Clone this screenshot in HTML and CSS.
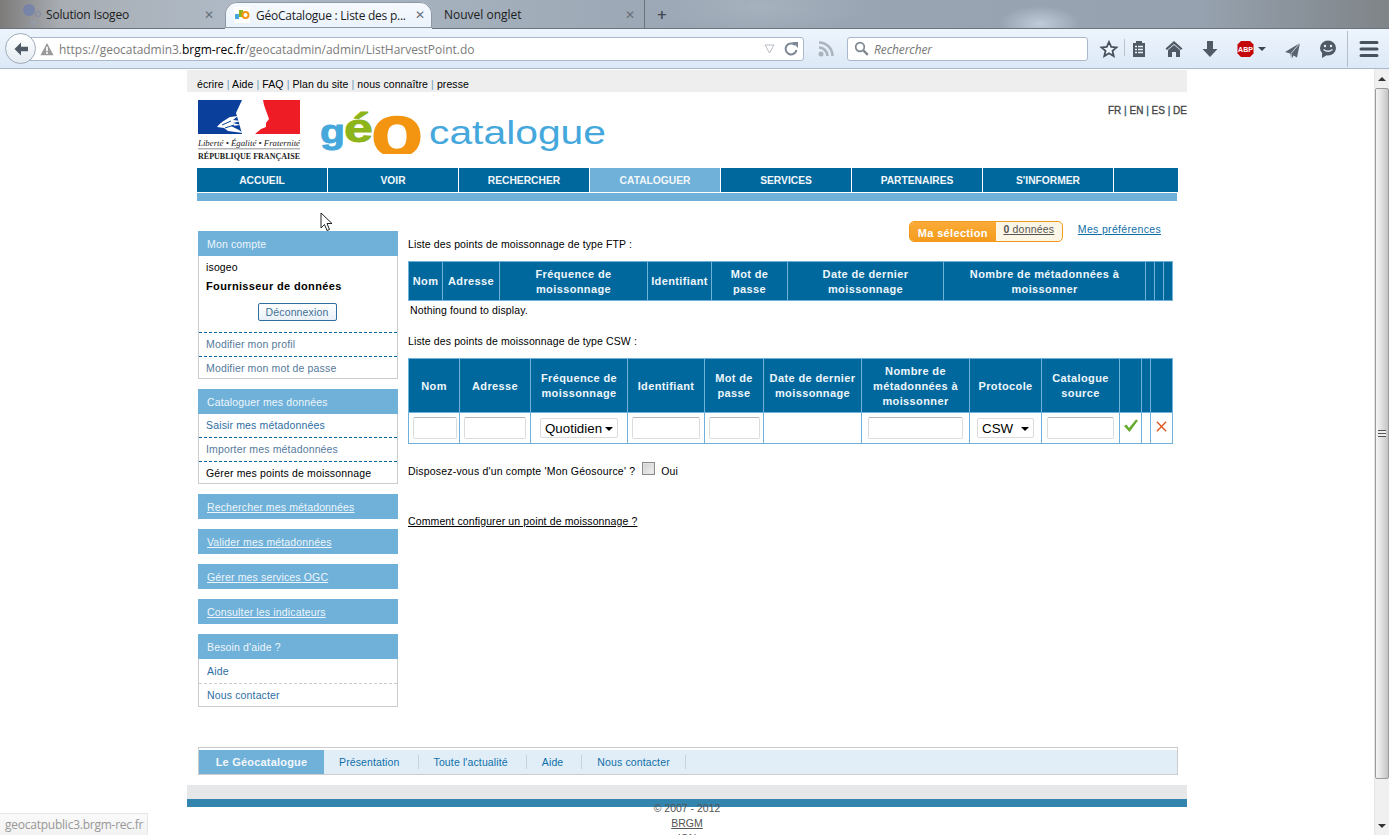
FILE: index.html
```html
<!DOCTYPE html>
<html lang="fr">
<head>
<meta charset="utf-8">
<title>GéoCatalogue : Liste des points de moissonnage</title>
<link rel="stylesheet" href="styles.css">
</head>
<body>
<header class="chrome">
  <div class="tabbar">
    <div class="tab tab-first">
      <svg class="fav-ghost" width="24" height="24" viewBox="0 0 24 24"><circle cx="7" cy="7" r="6" fill="#6f7fb0" opacity=".75"/><circle cx="16" cy="11" r="2.5" fill="none" stroke="#6f7fb0" opacity=".6"/><circle cx="11" cy="20" r="3" fill="#8fa0b8" opacity=".4"/></svg>
      <span class="tab-title">Solution Isogeo</span>
      <span class="tab-x">✕</span>
    </div>
    <div class="tab tab-active">
      <svg class="fav" width="16" height="16" viewBox="0 0 16 16"><rect width="16" height="16" fill="#fff"/><rect x="1" y="7" width="4" height="5" fill="#45a8dc"/><rect x="5" y="3" width="4" height="7" fill="#8db51b"/><circle cx="11.5" cy="8" r="3" fill="none" stroke="#f39510" stroke-width="2"/></svg>
      <span class="tab-title">GéoCatalogue : Liste des p...</span>
      <span class="tab-x">✕</span>
    </div>
    <div class="tab tab-third">
      <span class="tab-title">Nouvel onglet</span>
      <span class="tab-x">✕</span>
    </div>
    <span class="tab-plus">+</span>
  </div>
  <div class="toolbar">
    <div class="back"><svg width="18" height="18" viewBox="0 0 18 18"><path d="M9 2.5 2.5 9 9 15.500v-4.300h7V6.800H9z" fill="#4f5a66"/></svg></div>
    <div class="urlbar">
      <svg class="warn" width="14" height="14" viewBox="0 0 16 15"><path d="M8 .5 15.500 14.500H.5z" fill="#9a9a9a"/><rect x="7" y="5" width="2" height="5" fill="#fff"/><rect x="7" y="11" width="2" height="2" fill="#fff"/></svg>
      <span class="url"><span class="url-dim">https://geocatadmin3.</span>brgm-rec.fr<span class="url-dim">/geocatadmin/admin/ListHarvestPoint.do</span></span>
      <svg class="url-end" width="36" height="16" viewBox="0 0 36 16"><path d="M1 4h9L5.500 12z" fill="#fff" stroke="#b5bcc4"/><path d="M31 4a5.500 5.500 0 1 0 1.500 5" fill="none" stroke="#7d8894" stroke-width="2"/><path d="M28 1h6v6z" fill="#7d8894"/></svg>
    </div>
    <svg class="feed" width="16" height="16" viewBox="0 0 16 16"><circle cx="3" cy="13" r="2.500" fill="#aab4bf"/><path d="M1 6.500A8.500 8.500 0 0 1 9.500 15M1 1.500A13.500 13.500 0 0 1 14.500 15" fill="none" stroke="#aab4bf" stroke-width="2.600"/></svg>
    <div class="searchbar">
      <svg width="15" height="15" viewBox="0 0 15 15"><circle cx="6" cy="6" r="4.300" fill="none" stroke="#7d8690" stroke-width="1.700"/><path d="m9.500 9.500 4.300 4.300" stroke="#7d8690" stroke-width="2.400"/></svg>
      <span class="search-text">Rechercher</span>
    </div>
    <svg class="toolicons" width="294" height="40" viewBox="1095 29 294 40">
      <path d="M1109 42l2.200 4.900 5.300.500-4 3.500 1.200 5.200-4.700-2.800-4.700 2.800 1.200-5.200-4-3.500 5.300-.500z" fill="#fff" fill-opacity=".4" stroke="#47525e" stroke-width="1.800"/>
      <path d="M1124.500 39v17" stroke="#b9c4cf"/>
      <path d="M1133 43h3v-2h6v2h3v14h-12z" fill="#4f5a66"/><path d="M1135 46.500h2m1 0h5m-8 3h2m1 0h5m-8 3h2m1 0h5" stroke="#e6eff8" stroke-width="1.300"/>
      <path d="M1174 41l-8.500 7.500 1.500 1.500 7-6 7 6 1.500-1.500z" fill="#4f5a66"/><path d="M1168 50l6-5 6 5v7h-4v-5h-4v5h-4z" fill="#4f5a66"/>
      <path d="M1207 41h6v8h4.500l-7.500 8-7.500-8h4.500z" fill="#4f5a66"/>
      <path d="M1241 41h9l3.500 3.500v9l-3.500 3.500h-9l-3.500-3.500v-9z" fill="#c40808"/>
      <text x="1245.500" y="52" class="abp">ABP</text>
      <path d="M1258 47h8l-4 4z" fill="#3a4652"/>
      <path d="M1300 43l-15 9 5 1.500 1.500 5.500 2-3.500 3.500 2z" fill="#596470"/><path d="M1300 43l-9 10.500.5 5.500" fill="none" stroke="#e6eff8" stroke-width=".8"/>
      <ellipse cx="1328" cy="48" rx="8" ry="7.500" fill="#4f5a66"/><path d="M1322 53v5l5-3z" fill="#4f5a66"/><circle cx="1325" cy="46" r="1.200" fill="#e6eff8"/><circle cx="1331" cy="46" r="1.200" fill="#e6eff8"/><path d="M1323.500 49.500q4.500 3.500 9 0" fill="none" stroke="#e6eff8" stroke-width="1.300"/>
      <path d="M1347.500 31v36" stroke="#b3bfcb"/>
      <path d="M1361 42.500h16M1361 49h16M1361 55.500h16" stroke="#47525e" stroke-width="3" stroke-linecap="round"/>
    </svg>
  </div>
</header>

<div class="viewport">
  <div class="page">
    <div class="wrap">
      <div class="topstrip"><a>écrire</a> <i>|</i> <a>Aide</a> <i>|</i> <a>FAQ</a> <i>|</i> <a>Plan du site</a> <i>|</i> <a>nous connaître</a> <i>|</i> <a>presse</a></div>
      <div class="masthead">
        <svg class="rf" width="104" height="64" viewBox="0 0 104 64">
          <rect x="1" width="52" height="34" fill="#0a3f9b"/>
          <rect x="53" width="50" height="34" fill="#ee1c25"/>
          <path d="M45 0H66L67 5 72 19 69 23V27L64 29 58 34H45L42 23 39 13z" fill="#fff"/>
          <path d="M20 27C24 22 28 20 33 17L41 16 36 20 44 21 36 23 44 25 34 26 42 30 46 33 31 31 27 28z" fill="#fff"/>
          <path d="M25 25l9-4m-6 7l9-3" stroke="#0a3f9b"/>
          <text x="52" y="46" class="rf-motto" textLength="102" lengthAdjust="spacingAndGlyphs">Liberté • Égalité • Fraternité</text>
          <rect x="1" y="48" width="102" height="1.500" fill="#b5b5b5"/>
          <text x="52" y="59" class="rf-name" textLength="102" lengthAdjust="spacingAndGlyphs">RÉPUBLIQUE FRANÇAISE</text>
        </svg>
        <svg class="geo" width="290" height="44" viewBox="0 0 290 44">
          <text x="0" y="33" class="geo-g" transform="scale(1.200 1)">g</text>
          <text x="0" y="32" class="geo-e" transform="translate(24 0) scale(1.300 1)">é</text>
          <text x="0" y="46" class="geo-o" transform="translate(51 0) scale(1.150 1)">o</text>
          <text x="109" y="34" class="geo-cat" textLength="177" lengthAdjust="spacingAndGlyphs">catalogue</text>
        </svg>
        <div class="langs"><a>FR</a> <i>|</i> <a>EN</a> <i>|</i> <a>ES</a> <i>|</i> <a>DE</a></div>
      </div>
      <nav class="mainnav">
        <a>ACCUEIL</a><a>VOIR</a><a>RECHERCHER</a><a class="on">CATALOGUER</a><a>SERVICES</a><a>PARTENAIRES</a><a>S'INFORMER</a><a class="last"></a>
      </nav>
      <div class="subbar"></div>

      <div class="columns">
        <aside class="sidebar">
          <section class="box">
            <h3 class="box-head">Mon compte</h3>
            <div class="box-body">
              <div class="user">isogeo</div>
              <div class="role">Fournisseur de données</div>
              <div class="logout"><span class="btn">Déconnexion</span></div>
              <a class="row">Modifier mon profil</a>
              <a class="row">Modifier mon mot de passe</a>
            </div>
          </section>
          <section class="box">
            <h3 class="box-head">Cataloguer mes données</h3>
            <div class="box-body">
              <a class="row first">Saisir mes métadonnées</a>
              <a class="row">Importer mes métadonnées</a>
              <a class="row current">Gérer mes points de moissonnage</a>
            </div>
          </section>
          <h3 class="box-head solo"><u>Rechercher mes métadonnées</u></h3>
          <h3 class="box-head solo"><u>Valider mes métadonnées</u></h3>
          <h3 class="box-head solo"><u>Gérer mes services OGC</u></h3>
          <h3 class="box-head solo"><u>Consulter les indicateurs</u></h3>
          <section class="box">
            <h3 class="box-head">Besoin d'aide ?</h3>
            <div class="box-body">
              <a class="row first help">Aide</a>
              <a class="row help light">Nous contacter</a>
            </div>
          </section>
        </aside>

        <main class="main">
          <div class="selrow">
            <div class="badge"><span class="badge-l">Ma sélection</span><span class="badge-r"><b>0</b> données</span></div>
            <a class="prefs">Mes préférences</a>
          </div>
          <p class="title t1">Liste des points de moissonnage de type FTP :</p>
          <table class="grid ftp">
            <colgroup><col class="f1"><col class="f2"><col class="f3"><col class="f4"><col class="f5"><col class="f6"><col class="f7"><col class="f8"><col class="f8"><col class="f9"></colgroup>
            <thead><tr>
              <th>Nom</th><th>Adresse</th><th>Fréquence de<br>moissonnage</th><th>Identifiant</th><th>Mot de<br>passe</th><th>Date de dernier<br>moissonnage</th><th>Nombre de métadonnées à<br>moissonner</th><th></th><th></th><th></th>
            </tr></thead>
          </table>
          <p class="empty">Nothing found to display.</p>
          <p class="title t2">Liste des points de moissonnage de type CSW :</p>
          <table class="grid csw">
            <colgroup><col class="c1"><col class="c2"><col class="c3"><col class="c4"><col class="c5"><col class="c6"><col class="c7"><col class="c8"><col class="c9"><col class="c10"><col class="c11"><col class="c12"></colgroup>
            <thead><tr>
              <th>Nom</th><th>Adresse</th><th>Fréquence de<br>moissonnage</th><th>Identifiant</th><th>Mot de<br>passe</th><th>Date de dernier<br>moissonnage</th><th>Nombre de<br>métadonnées à<br>moissonner</th><th>Protocole</th><th>Catalogue<br>source</th><th></th><th></th><th></th>
            </tr></thead>
            <tbody><tr>
              <td><input class="in w44" type="text"></td>
              <td><input class="in w62" type="text"></td>
              <td><span class="sel s78"><select><option>Quotidien</option></select></span></td>
              <td><input class="in w68" type="text"></td>
              <td><input class="in w51" type="text"></td>
              <td></td>
              <td><input class="in w95" type="text"></td>
              <td><span class="sel s57"><select><option>CSW</option></select></span></td>
              <td><input class="in w67" type="text"></td>
              <td><svg class="act" width="16" height="14" viewBox="0 0 16 14"><path d="M1 7l2.500-1.500L6 9l7-8.500 2 1L6.500 13z" fill="#66ab2a"/></svg></td>
              <td></td>
              <td><svg class="act" width="13" height="13" viewBox="0 0 14 14"><path d="M2 2l10 10M12 2 2 12" stroke="#e2571e" stroke-width="1.500"/></svg></td>
            </tr></tbody>
          </table>
          <p class="geosource">Disposez-vous d'un compte 'Mon Géosource' ? <input class="check" type="checkbox"> <span class="oui">Oui</span></p>
          <p class="howto"><a>Comment configurer un point de moissonnage ?</a></p>
        </main>
      </div>

      <div class="footnav">
        <strong>Le Géocatalogue</strong><a>Présentation</a><a>Toute l'actualité</a><a>Aide</a><a>Nous contacter</a>
      </div>
      <div class="band-grey"></div>
      <div class="band-teal"></div>
      <div class="legal">© 2007 - 2012<br><a>BRGM</a><br><a>IGN</a></div>
    </div>
  </div>
  <div class="scrollbar">
    <div class="sb-btn"><span class="arrow-up"></span></div>
    <div class="sb-thumb"><span class="grip"></span></div>
    <div class="sb-track"></div>
    <div class="sb-btn down"><span class="arrow-down"></span></div>
  </div>
</div>

<div class="status">geocatpublic3.brgm-rec.fr</div>
<svg class="cursor" width="14" height="21" viewBox="0 0 14 21"><path d="M1 1v15l3.500-3.500 2.500 6 2.500-1-2.500-6H12z" fill="#fff" stroke="#222"/></svg>
</body>
</html>
```
FILE: styles.css
```css
* { box-sizing: border-box; }
html, body { margin: 0; height: 835px; overflow: hidden; background: #fff; }
body { font-family: "Liberation Sans", Arial, sans-serif; font-size: 11px; color: #000; position: relative; }
a { color: inherit; }
p, h3 { margin: 0; font-weight: normal; }
i { font-style: normal; }

/* browser chrome */
.chrome { height: 69px; font-family: "Open Sans", sans-serif; }
.tabbar {
  height: 29px; display: flex; align-items: stretch; position: relative;
  box-shadow: inset 0 -1px #69747f;
  background:
    radial-gradient(ellipse 40px 18px at 1040px 24px, rgba(205,217,230,.75), transparent),
    radial-gradient(ellipse 110px 30px at 760px 6px, rgba(190,200,212,.35), transparent),
    linear-gradient(90deg, #7d7b7a 0, #a8adb3 60px, #aeb9c5 220px, #9aa6b3 700px, #96a2af 1200px, #7f8488 1389px);
}
.tab { display: flex; align-items: center; font-size: 12px; color: #1c1c1c; flex: none; }
.tab-title { white-space: nowrap; }
.tab-x { position: absolute; font-size: 12px; font-weight: 700; color: #66707a; font-family: "DejaVu Sans", sans-serif; }
.tab-first { width: 225px; padding-left: 22px; }
.tab-first .tab-title { letter-spacing: -.2px; }
.tab-first .tab-x { left: 204px; }
.tab-active {
  width: 207px; margin-top: 2px; padding-left: 9px; border-radius: 12px 12px 0 0;
  background: linear-gradient(#f6fafe, #eaf2fb); box-shadow: 0 0 0 1px #8d98a4 inset;
  border-bottom: 1px solid #eaf2fb;
}
.tab-active .fav { margin-right: 6px; }
.tab-active .tab-title { letter-spacing: -.25px; }
.tab-active .tab-x { left: 415px; }
.tab-third { width: 213px; padding-left: 12px; border-right: 1px solid #68737e; }
.tab-third .tab-x { left: 625px; }
.tab-plus { margin-left: 12px; align-self: center; font-size: 17px; font-weight: 600; color: #3f4852; }

.toolbar {
  height: 40px; display: flex; align-items: center; padding-left: 5px;
  background: linear-gradient(#edf4fc, #dde9f7); border-bottom: 1px solid #a9b9cb; position: relative;
}
.back {
  width: 31px; height: 31px; border-radius: 50%; background: linear-gradient(#fff, #e4ebf3); border: 1px solid #9eacbb;
  display: flex; align-items: center; justify-content: center; flex: none; position: relative; z-index: 1;
}
.urlbar {
  width: 777px; height: 24px; margin-left: -8px; padding-left: 11px; display: flex; align-items: center;
  background: #fff; border: 1px solid #a9b9cb; border-radius: 0 3px 3px 0; font-size: 12px;
}
.warn { flex: none; }
.url { margin-left: 5px; padding-top: 1px; color: #000; white-space: nowrap; letter-spacing: -.03px; }
.url-dim { color: #7b7b7b; }
.url-end { margin-left: auto; margin-right: 3px; }
.feed { margin: 0 13px 0 14px; flex: none; }
.searchbar {
  width: 241px; height: 24px; padding-left: 6px; display: flex; align-items: center; gap: 5px;
  background: #fff; border: 1px solid #a9b9cb; border-radius: 3px; flex: none;
}
.search-text { padding-top: 1px; font-style: italic; font-size: 12px; color: #777; letter-spacing: -.1px; }
.toolicons { flex: none; margin-left: 7px; }
.abp { font: bold 7px "Liberation Sans", sans-serif; fill: #fff; text-anchor: middle; }

/* viewport */
.viewport { display: flex; height: 766px; }
.page { flex: 1; overflow: hidden; min-width: 0; }
.wrap { width: 1000px; margin: 0 auto; }

.topstrip { height: 22px; margin-top: 1px; background: #eee; padding: 8px 0 0 10px; line-height: 13px; font-size: 10.500px; letter-spacing: .09px; white-space: nowrap; }
.topstrip i { color: #6b9ab8; }

.masthead { height: 76px; padding: 8px 0 0 10px; display: flex; align-items: flex-start; }
.rf { flex: none; }
.rf-motto { font: italic 8px "Liberation Serif", serif; text-anchor: middle; fill: #222; }
.rf-name { font: bold 8.500px "Liberation Serif", serif; text-anchor: middle; fill: #222; }
.geo { flex: none; margin: 10px 0 0 19px; }
.geo-g { font: bold 34px "Liberation Sans", sans-serif; fill: #45a8dc; stroke: #45a8dc; stroke-width: .9px; }
.geo-e { font: bold 40px "Liberation Sans", sans-serif; fill: #8db51b; stroke: #8db51b; stroke-width: .9px; }
.geo-o { font: bold 74px "Liberation Sans", sans-serif; fill: #f39510; stroke: #f39510; stroke-width: 1.500px; }
.geo-cat { font: 34px "Liberation Sans", sans-serif; fill: #45a8dc; }
.langs { margin: 4px 0 0 auto; font-size: 10px; color: #444; line-height: 13px; -webkit-text-stroke: .3px #444; white-space: nowrap; }
.langs i { color: #00689d; }

.mainnav { height: 24px; margin-left: 10px; width: 981px; display: flex; background: #00689d; }
.mainnav a {
  width: 131px; flex: none; border-right: 1px solid #fff; text-align: center; line-height: 25px;
  color: #f2f7fb; font-size: 10.250px; font-weight: 700;
}
.mainnav a.on { background: #6fb1d9; }
.mainnav a.last { width: 64px; border: 0; }
.subbar { width: 980px; height: 8px; margin: 1px 0 0 10px; background: #6fb1d9; }

.columns { display: flex; padding-left: 11px; margin-top: 20px; }
.sidebar { width: 200px; flex: none; padding-top: 10px; display: flex; flex-direction: column; gap: 10px; letter-spacing: .15px; }
.box-head { height: 25px; line-height: 26px; padding-left: 9px; background: #6fb1d9; color: #eef6fb; font-size: 10.500px; }
.box-head u { text-decoration-thickness: 1px; }
.box-body { border: 1px solid #ccc; border-top: 0; }
.user { height: 24px; line-height: 23px; padding-left: 7px; font-size: 10.500px; }
.role { height: 14px; line-height: 12px; padding-left: 7px; font-size: 11px; font-weight: 700; letter-spacing: .36px; }
.logout { height: 38px; padding: 9px 2px 0 0; text-align: center; }
.btn {
  display: inline-block; width: 79px; height: 18px; line-height: 16px; border: 1px solid #2f6f9f; border-radius: 2px;
  color: #3f6f97; font-size: 10.500px; background: linear-gradient(#fff, #e9f1f7);
}
.row { display: block; height: 24px; line-height: 23px; padding-left: 7px; border-top: 1px dashed #00689d; color: #557a9c; font-size: 10.500px; }
.row:last-child { height: 22px; }
.row.first { border-top: 0; height: 23px; color: #2d6ea3; }
.row.current { color: #000; }
.row.help { padding-left: 8px; color: #2d6ea3; }
.row.help.first { height: 24px; line-height: 25px; }
.row.light { border-top-color: #ccc; height: 23px; }

.main { margin-left: 10px; width: 779px; flex: none; }
.selrow { height: 17px; display: flex; justify-content: flex-end; align-items: flex-start; padding-right: 26px; }
.badge { display: flex; height: 21px; width: 154px; border: 1px solid #f39a1e; border-radius: 5px; overflow: hidden; background: #fbf6e6; flex: none; }
.badge-l { width: 86px; background: linear-gradient(#fbab38, #f49b1d); color: #fff; font-weight: 700; font-size: 11px; letter-spacing: .33px; line-height: 23px; text-align: center; }
.badge-r { flex: 1; text-align: center; font-size: 10.500px; letter-spacing: .2px; line-height: 14px; color: #555; text-decoration: underline; }
.prefs { margin-left: 15px; margin-top: 2px; color: #0f6ea8; font-size: 10.500px; letter-spacing: .33px; text-decoration: underline; line-height: 13px; white-space: nowrap; }
.title { line-height: 12px; font-size: 10.500px; letter-spacing: .12px; }
.t1 { margin-bottom: 11px; }
.t2 { margin: 19px 0 11px; }
.empty { margin-top: 3px; padding-left: 2px; line-height: 12px; font-size: 10.500px; letter-spacing: .12px; }

.grid { border-collapse: collapse; table-layout: fixed; width: 764px; }
.grid th { background: #00689d; color: #eef6fb; border: 1px solid #6fb1d9; padding: 1px 0 0; font-size: 11px; font-weight: 700; letter-spacing: .38px; line-height: 15px; text-align: center; white-space: nowrap; }
.grid td { border: 1px solid #6fb1d9; padding: 0; text-align: center; height: 31px; }
.ftp thead tr { height: 39px; }
.csw thead tr { height: 54px; }
.f1 { width: 34px; } .f2 { width: 57px; } .f3 { width: 148px; } .f4 { width: 64px; } .f5 { width: 76px; }
.f6 { width: 156px; } .f7 { width: 202px; } .f8 { width: 9px; } .f9 { width: 9px; }
.c1 { width: 51px; } .c2 { width: 71px; } .c3 { width: 97px; } .c4 { width: 77px; } .c5 { width: 59px; } .c6 { width: 98px; }
.c7 { width: 108px; } .c8 { width: 72px; } .c9 { width: 78px; } .c10 { width: 22px; } .c11 { width: 9px; } .c12 { width: 22px; }
.in { display: block; margin: 0 auto; height: 22px; padding: 0; border: 1px solid #dcdcdc; border-top-color: #b5b5b5; border-radius: 2px; background: #fff; }
.w44 { width: 44px; transform: translateX(1px); } .w62 { width: 62px; } .w68 { width: 68px; } .w51 { width: 51px; } .w95 { width: 95px; } .w67 { width: 67px; }
.sel { display: block; margin: 0 auto; position: relative; height: 20px; }
.s78 { width: 78px; } .s57 { width: 57px; }
.sel select {
  appearance: none; width: 100%; height: 20px; padding: 0 0 0 4px; border: 1px solid #dcdcdc; border-radius: 2px; background: #fff;
  font: 13.333px "Liberation Sans", sans-serif; color: #000; display: block;
}
.sel::after { content: ""; position: absolute; right: 5px; top: 9px; border: 4px solid transparent; border-top: 4px solid #000; border-bottom: 0; }
.act { display: block; margin: -4px auto 0; }
.geosource { margin-top: 21px; line-height: 12px; font-size: 10.500px; letter-spacing: .19px; display: flex; align-items: center; }
.check { appearance: none; width: 13px; height: 13px; margin: -5px 0 0 7px; border: 1px solid #8b8b8b; background: linear-gradient(135deg, #cfcfcf, #f2f2f2); box-shadow: inset 0 0 0 1px #e2e2e2; }
.oui { margin-left: 6px; letter-spacing: .12px; }
.howto { margin-top: 38px; line-height: 12px; font-size: 10.500px; letter-spacing: .12px; }
.howto a { text-decoration: underline; }

.footnav {
  width: 980px; height: 28px; margin: 40px 0 0 11px; padding: 2px 0 0 0; display: flex; align-items: stretch;
  border: 1px solid #ccc; background: linear-gradient(#fff 0, #fff 2px, #e1eef8 2px); font-size: 10.500px; letter-spacing: .13px; color: #0f6ea8;
}
.footnav strong { width: 125px; background: #6fb1d9; color: #f2f7fb; font-size: 11px; letter-spacing: .2px; line-height: 24px; text-align: center; }
.footnav a { margin: 5px 0; padding: 0 18px 0 15px; line-height: 14px; border-right: 1px solid #c9d2d9; }
.footnav a:last-child { padding-right: 15px; }
.band-grey { height: 14px; margin-top: 10px; background: #e6e7e8; }
.band-teal { height: 8px; background: #3385ad; }
.legal { margin-top: -6px; text-align: center; line-height: 15px; font-size: 10.500px; color: #555; }
.legal a { text-decoration: underline; }

/* scrollbar */
.scrollbar { width: 15px; flex: none; display: flex; flex-direction: column; background: #f0f0f0; border-left: 1px solid #e6e6e6; }
.sb-btn { height: 19px; display: flex; align-items: center; justify-content: center; flex: none; }
.sb-thumb { height: 691px; flex: none; position: relative; border: 1px solid #9a9a9a; border-radius: 2px; background: linear-gradient(90deg, #f5f5f5, #e2e2e2 45%, #c4c4c4); display: flex; align-items: center; justify-content: center; }
.grip { width: 8px; height: 7px; background: repeating-linear-gradient(#555 0 1px, #eee 1px 3px); }
.sb-track { flex: 1; }
.arrow-up { border: 4px solid transparent; border-bottom: 4px solid #333; border-top: 0; }
.arrow-down { border: 4px solid transparent; border-top: 4px solid #333; border-bottom: 0; }

/* overlays */
.status {
  position: absolute; left: 0; bottom: 0; width: 148px; height: 22px; padding-left: 5px;
  font: 12px/21px "Open Sans", sans-serif; color: #979797; letter-spacing: -.02em; white-space: nowrap;
  background: linear-gradient(#fafafa, #f2f2f2); border: 1px solid #e5e5e5; border-left: 0; border-bottom: 0;
}
.cursor { position: absolute; left: 320px; top: 212px; }
.fav-ghost { flex: none; }
```
